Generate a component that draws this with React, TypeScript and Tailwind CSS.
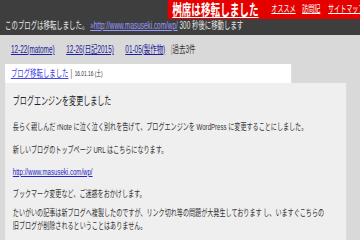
import React from "react";

const jp = "font-['Liberation_Sans','Noto_Sans_CJK_JP',sans-serif]";

const recent = [
  { label: "12-22(matome)" },
  { label: "12-26(日記2015)" },
  { label: "01-05(製作物)" },
];

const App = () => {
  return (
    <div className={`w-[360px] h-[240px] overflow-hidden bg-[#d9d9d9] ${jp}`}>
      {/* whole page is drawn wide then squeezed horizontally */}
      <div className="w-[563px] origin-top-left scale-x-[0.64]">
        {/* Top bar */}
        <div className="h-[35px] bg-[#3e3e3e]">
          <div className="flex justify-end">
            <div className="w-[301px] h-[19px] bg-[#e50000] flex items-center pl-[7px] whitespace-nowrap overflow-hidden">
              <a className="shrink-0 text-[15px] leading-[17px] font-bold text-white underline decoration-1 underline-offset-2">
                桝席は移転しました
              </a>
              <a className="shrink-0 ml-[20px] text-[9.5px] text-white underline">オススメ</a>
              <a className="shrink-0 ml-[10px] text-[9.5px] text-white underline">訪問記</a>
              <a className="shrink-0 ml-[12px] text-[9.5px] text-white underline">サイトマップ</a>
            </div>
          </div>
          <div className="pl-[8px] pt-[1px] text-[10px] leading-[12px] text-[#e6e6e6] whitespace-nowrap">
            このブログは移転しました。
            <a className="ml-[3px] text-[#9a9aff] underline">
              »http://www.masuseki.com/wp/
            </a>{" "}
            300 秒後に移動します
          </div>
        </div>

        {/* Recent entries */}
        <div className="h-[29px] flex items-center pl-[17px] text-[10px]">
          {recent.map((r) => (
            <a key={r.label} className="mr-[18px] text-[#20209a] underline whitespace-nowrap">
              {r.label}
            </a>
          ))}
          <span className="-ml-[9px] text-[#9a7a50]">|</span>
          <span className="text-[#333]">過去3件</span>
        </div>

        {/* Tab */}
        <div className="ml-[8px] w-[447px] h-[19px] bg-white flex items-center pl-[9px]">
          <a className="text-[10px] text-[#4646e6] underline">ブログ移転しました</a>
          <span className="ml-[3px] text-[10px] text-[#555]">|</span>
          <span className="ml-[4px] text-[7.5px] text-[#333]">16.01.16 (土)</span>
        </div>

        {/* Content */}
        <div className="ml-[8px] w-[533px] h-[160px] bg-[#efefef] pl-[12px] pr-[10px] pt-[12px] text-[9.5px] leading-[13px] text-[#333]">
          <h2 className="text-[11px] leading-[13px] text-[#222]">ブログエンジンを変更しました</h2>
          <p className="mt-[12px]">
            長らく親しんだ rNote に泣く泣く別れを告げて、プログエンジンを WordPress に変更することにしました。
          </p>
          <p className="mt-[10px]">新しいブログのトップページ URL はこちらになります。</p>
          <p className="mt-[9px]">
            <a className="text-[#2323c8] underline">http://www.masuseki.com/wp/</a>
          </p>
          <p className="mt-[9px]">ブックマーク変更など、ご迷惑をおかけします。</p>
          <p className="mt-[6px]">
            たいがいの記事は新ブログへ複製したのですが、リンク切れ等の問題が大発生しております し、いますぐこちらの
            <br />
            旧ブログが削除されるということはありません。
          </p>
        </div>
      </div>
    </div>
  );
};

export default App;
